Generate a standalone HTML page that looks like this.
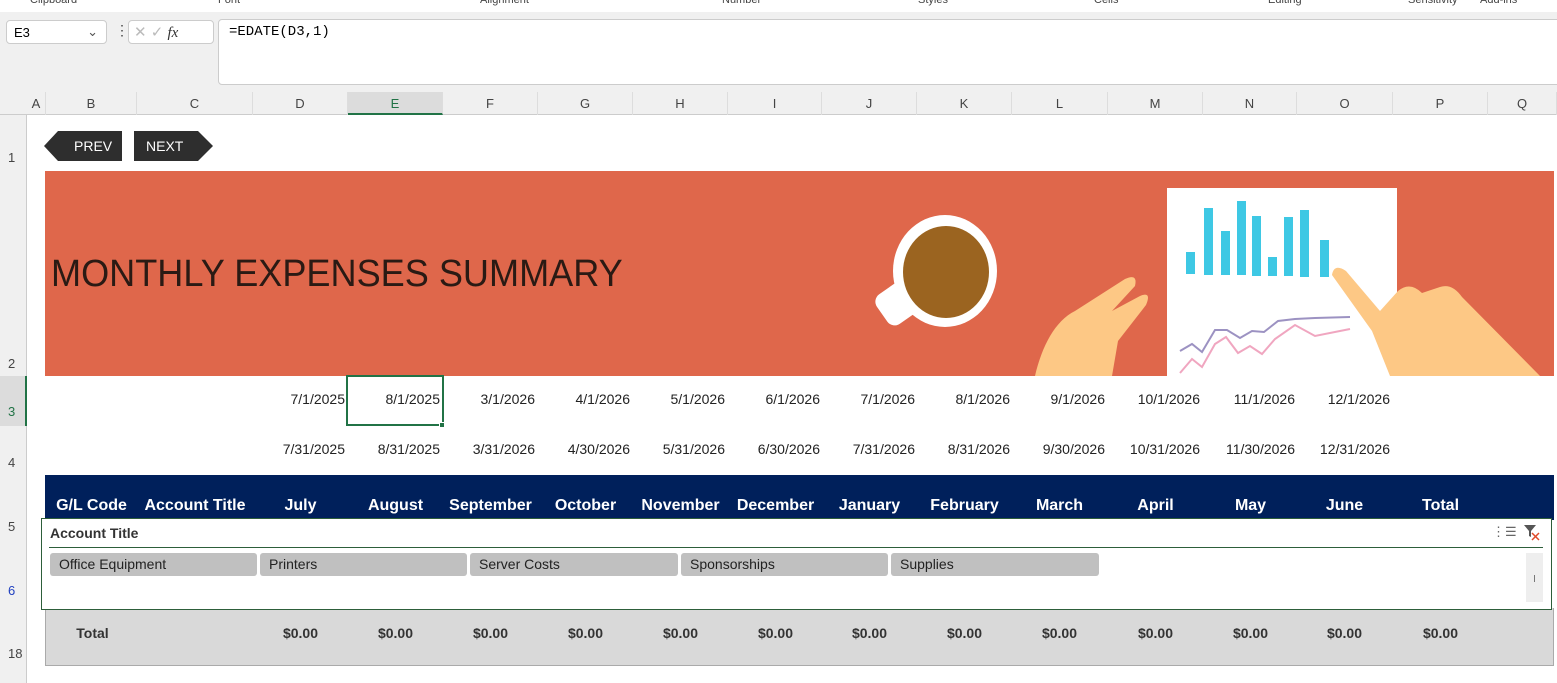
<!DOCTYPE html>
<html><head><meta charset="utf-8"><style>
*{margin:0;padding:0;box-sizing:border-box}
body{width:1557px;height:683px;overflow:hidden;background:#fff;font-family:"Liberation Sans",sans-serif;position:relative}
.a{position:absolute}
.ch{position:absolute;top:92px;height:23px;font-size:13px;color:#444;text-align:center;line-height:23px;border-right:1px solid #ddd}
.rh{position:absolute;left:0;width:27px;font-size:13px;color:#444;padding-left:8px}
.d{position:absolute;font-size:14px;color:#222;text-align:right;width:95px}
.h{position:absolute;top:497px;font-size:16px;font-weight:bold;color:#fff;text-align:center;width:95px}
.t{position:absolute;top:625px;font-size:14px;font-weight:bold;color:#333;text-align:center;width:95px}
.chip{position:absolute;top:553px;height:23px;background:#c0c0c0;border-radius:3px;font-size:14px;color:#222;padding-left:9px;line-height:23px}
</style></head><body>
<div class="a" style="left:0;top:0;width:1557px;height:12px;background:#fff;box-shadow:0 2px 3px rgba(0,0,0,.15);font-size:11px;color:#444;overflow:hidden">
<span class="a" style="left:30px;top:-6px">Clipboard</span><span class="a" style="left:218px;top:-6px">Font</span><span class="a" style="left:480px;top:-6px">Alignment</span><span class="a" style="left:722px;top:-6px">Number</span><span class="a" style="left:918px;top:-6px">Styles</span><span class="a" style="left:1094px;top:-6px">Cells</span><span class="a" style="left:1268px;top:-6px">Editing</span><span class="a" style="left:1408px;top:-6px">Sensitivity</span><span class="a" style="left:1480px;top:-6px">Add-ins</span></div>
<div class="a" style="left:0;top:12px;width:1557px;height:80px;background:#f0f0f0"></div>
<div class="a" style="left:6px;top:20px;width:101px;height:24px;background:#fff;border:1px solid #ccc;border-radius:4px;font-size:13px;padding:4px 7px">E3<span style="position:absolute;right:8px;top:3px;color:#555">⌄</span></div>
<div class="a" style="left:115px;top:22px;font-size:14px;color:#444">⋮</div>
<div class="a" style="left:128px;top:20px;width:86px;height:24px;background:#fff;border:1px solid #ccc;border-radius:4px;font-size:15px;color:#bbb;padding:2px 5px">✕ ✓ <i style="color:#333;font-family:'Liberation Serif'">fx</i></div>
<div class="a" style="left:218px;top:19px;width:1345px;height:66px;background:#fff;border:1px solid #ccc;border-radius:4px;font-family:'Liberation Mono',monospace;font-size:14px;padding:4px 10px">=EDATE(D3,1)</div>
<div class="a" style="left:0;top:92px;width:1557px;height:23px;background:#f0f0f0;border-bottom:1px solid #ccc"></div>
<div class="a" style="left:0;top:115px;width:27px;height:568px;background:#f0f0f0;border-right:1px solid #ccc"></div>
<div class="ch" style="left:27px;width:19px">A</div><div class="ch" style="left:46px;width:91px">B</div><div class="ch" style="left:137px;width:116px">C</div><div class="ch" style="left:253px;width:95px">D</div><div class="ch" style="left:348px;width:95px;background:#dcdcdc;border-bottom:2px solid #217346;color:#217346">E</div><div class="ch" style="left:443px;width:95px">F</div><div class="ch" style="left:538px;width:95px">G</div><div class="ch" style="left:633px;width:95px">H</div><div class="ch" style="left:728px;width:94px">I</div><div class="ch" style="left:822px;width:95px">J</div><div class="ch" style="left:917px;width:95px">K</div><div class="ch" style="left:1012px;width:96px">L</div><div class="ch" style="left:1108px;width:95px">M</div><div class="ch" style="left:1203px;width:94px">N</div><div class="ch" style="left:1297px;width:96px">O</div><div class="ch" style="left:1393px;width:95px">P</div><div class="ch" style="left:1488px;width:69px">Q</div>
<div class="rh" style="top:150px">1</div><div class="rh" style="top:356px">2</div><div class="rh" style="top:376px;height:50px;background:#dcdcdc;color:#217346;border-right:2px solid #217346;padding-top:28px">3</div><div class="rh" style="top:455px">4</div><div class="rh" style="top:519px">5</div><div class="rh" style="top:583px;color:#2040c0">6</div><div class="rh" style="top:646px">18</div>
<svg class="a" style="left:44px;top:131px" width="170" height="30"><polygon points="0,15 14,0 78,0 78,30 14,30" fill="#2e2e2e"/><polygon points="90,0 154,0 169,15 154,30 90,30" fill="#2e2e2e"/><text x="30" y="20" fill="#fff" font-size="14" font-family="Liberation Sans">PREV</text><text x="102" y="20" fill="#fff" font-size="14" font-family="Liberation Sans">NEXT</text></svg>
<div class="a" style="left:45px;top:171px;width:1509px;height:205px;background:#df674b;overflow:hidden">
<div class="a" style="left:6px;top:82px;font-size:38px;color:#2a1a14;transform:scaleX(.95);transform-origin:0 0;white-space:nowrap">MONTHLY EXPENSES SUMMARY</div>
<svg class="a" style="left:805px;top:0" width="704" height="205">
<ellipse cx="95" cy="100" rx="52" ry="56" fill="#fff"/><rect x="28" y="112" width="46" height="36" rx="9" transform="rotate(-35 51 130)" fill="#fff"/><ellipse cx="96" cy="101" rx="43" ry="46" fill="#9b6420"/>
<rect x="317" y="17" width="230" height="188" fill="#fff"/>
<g fill="#3ec8e4"><rect x="336" y="81" width="9" height="22"/><rect x="354" y="37" width="9" height="67"/><rect x="371" y="60" width="9" height="44"/><rect x="387" y="30" width="9" height="74"/><rect x="402" y="45" width="9" height="60"/><rect x="418" y="86" width="9" height="19"/><rect x="434" y="46" width="9" height="59"/><rect x="450" y="39" width="9" height="67"/><rect x="470" y="69" width="9" height="37"/></g>
<polyline points="330,180 342,173 352,181 365,159 377,159 390,167 402,160 414,161 428,150 445,148 465,147 500,146" fill="none" stroke="#9c92c2" stroke-width="2"/>
<polyline points="330,202 342,188 352,196 365,173 376,166 388,182 400,175 412,183 425,168 445,154 465,165 500,158" fill="none" stroke="#f0a6c0" stroke-width="2"/>
<path d="M185,205 C192,175 205,150 225,140 L275,108 Q288,102 285,115 L262,140 L290,125 Q302,120 296,134 L268,170 L262,205Z" fill="#fdc885"/>
<path d="M482,104 Q484,92 496,100 L530,140 L548,120 Q560,110 572,122 L590,116 Q602,112 612,126 L690,205 L540,205 L522,160Z" fill="#fdc885"/>
</svg></div>
<div class="a" style="left:346px;top:375px;width:98px;height:51px;border:2px solid #217346"></div><div class="a" style="left:439px;top:422px;width:6px;height:6px;background:#217346;border:1px solid #fff"></div>
<div class="d" style="left:250px;top:391px">7/1/2025</div><div class="d" style="left:345px;top:391px">8/1/2025</div><div class="d" style="left:440px;top:391px">3/1/2026</div><div class="d" style="left:535px;top:391px">4/1/2026</div><div class="d" style="left:630px;top:391px">5/1/2026</div><div class="d" style="left:725px;top:391px">6/1/2026</div><div class="d" style="left:820px;top:391px">7/1/2026</div><div class="d" style="left:915px;top:391px">8/1/2026</div><div class="d" style="left:1010px;top:391px">9/1/2026</div><div class="d" style="left:1105px;top:391px">10/1/2026</div><div class="d" style="left:1200px;top:391px">11/1/2026</div><div class="d" style="left:1295px;top:391px">12/1/2026</div>
<div class="d" style="left:250px;top:441px">7/31/2025</div><div class="d" style="left:345px;top:441px">8/31/2025</div><div class="d" style="left:440px;top:441px">3/31/2026</div><div class="d" style="left:535px;top:441px">4/30/2026</div><div class="d" style="left:630px;top:441px">5/31/2026</div><div class="d" style="left:725px;top:441px">6/30/2026</div><div class="d" style="left:820px;top:441px">7/31/2026</div><div class="d" style="left:915px;top:441px">8/31/2026</div><div class="d" style="left:1010px;top:441px">9/30/2026</div><div class="d" style="left:1105px;top:441px">10/31/2026</div><div class="d" style="left:1200px;top:441px">11/30/2026</div><div class="d" style="left:1295px;top:441px">12/31/2026</div>
<div class="a" style="left:45px;top:475px;width:1509px;height:45px;background:#00205b"></div>
<div class="h" style="left:44px;width:95px">G/L Code</div><div class="h" style="left:137px;width:116px">Account Title</div>
<div class="h" style="left:253px">July</div><div class="h" style="left:348px">August</div><div class="h" style="left:443px">September</div><div class="h" style="left:538px">October</div><div class="h" style="left:633px">November</div><div class="h" style="left:728px">December</div><div class="h" style="left:822px">January</div><div class="h" style="left:917px">February</div><div class="h" style="left:1012px">March</div><div class="h" style="left:1108px">April</div><div class="h" style="left:1203px">May</div><div class="h" style="left:1297px">June</div><div class="h" style="left:1393px">Total</div>
<div class="a" style="left:45px;top:608px;width:1509px;height:58px;background:#d9d9d9;border:1px solid #aaa;border-top:none"></div>
<div class="t" style="left:45px">Total</div>
<div class="t" style="left:253px">$0.00</div><div class="t" style="left:348px">$0.00</div><div class="t" style="left:443px">$0.00</div><div class="t" style="left:538px">$0.00</div><div class="t" style="left:633px">$0.00</div><div class="t" style="left:728px">$0.00</div><div class="t" style="left:822px">$0.00</div><div class="t" style="left:917px">$0.00</div><div class="t" style="left:1012px">$0.00</div><div class="t" style="left:1108px">$0.00</div><div class="t" style="left:1203px">$0.00</div><div class="t" style="left:1297px">$0.00</div><div class="t" style="left:1393px">$0.00</div>
<div class="a" style="left:41px;top:518px;width:1511px;height:92px;background:#fff;border:1px solid #2d5e3a"></div>
<div class="a" style="left:50px;top:525px;font-size:14px;font-weight:bold;color:#333">Account Title</div>
<div class="a" style="left:49px;top:547px;width:1494px;height:1px;background:#2d5e3a"></div>
<div class="a" style="left:1492px;top:524px;font-size:13px;color:#666">⋮☰</div>
<svg class="a" style="left:1523px;top:524px" width="18" height="18"><path d="M1,1 H13 L8,7 V13 L6,12 V7Z" fill="#555"/><path d="M9,9 L16,16 M16,9 L9,16" stroke="#e04a2a" stroke-width="1.5"/></svg>
<div class="chip" style="left:50px;width:207px">Office Equipment</div><div class="chip" style="left:260px;width:207px">Printers</div><div class="chip" style="left:470px;width:208px">Server Costs</div><div class="chip" style="left:681px;width:207px">Sponsorships</div><div class="chip" style="left:891px;width:208px">Supplies</div>
<div class="a" style="left:1526px;top:553px;width:17px;height:49px;background:#eee"></div><div class="a" style="left:1534px;top:575px;width:1px;height:7px;background:#777"></div>
</body></html>
